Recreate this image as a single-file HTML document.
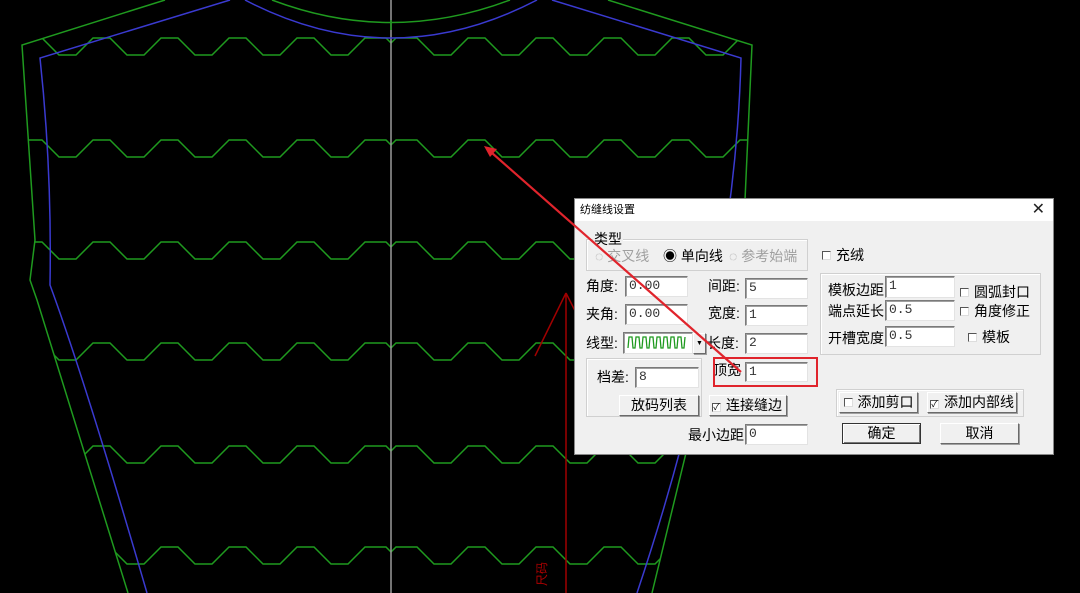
<!DOCTYPE html>
<html><head><meta charset="utf-8">
<style>
*{margin:0;padding:0;box-sizing:border-box}
body{width:1080px;height:593px;background:#000;position:relative;overflow:hidden;font-family:"Liberation Sans","Noto Sans CJK SC",sans-serif;font-size:14px;color:#000}
svg.bg{position:absolute;left:0;top:0}
.dlg{position:absolute;left:574px;top:198px;width:480px;height:257px;background:#f0f0f0;border:1px solid #888}
.title{position:absolute;left:0;top:0;width:478px;height:22px;background:#fff;font-size:11px;line-height:22px;padding-left:5px}
.x{position:absolute;right:8px;top:0;font-size:16px;line-height:21px;color:#222}
.a{position:absolute;white-space:nowrap;line-height:16px}
.inp{position:absolute;background:#fff;border:1px solid #7a7a7a;border-right-color:#e3e3e3;border-bottom-color:#e3e3e3;box-shadow:inset 1px 1px 0 #a0a0a0;font-family:"Liberation Mono","Noto Sans CJK SC",monospace;font-size:13px;line-height:18px;padding-left:3px;color:#333}
.btn{position:absolute;background:#f0f0f0;border:1px solid #fff;border-right-color:#6a6a6a;border-bottom-color:#6a6a6a;box-shadow:1px 1px 0 #a0a0a0;text-align:center;line-height:19px;font-size:14px}
.grp{position:absolute;border:1px solid #d0d0d0;box-shadow:inset 1px 1px 0 #fff}
.cb{display:inline-block;width:9px;height:9px;border:1px solid #555;border-right-color:#ddd;border-bottom-color:#ddd;background:#fff;vertical-align:0px;margin-right:5px;font-size:9px;line-height:7px;text-align:center}
.grey{color:#a0a0a0}
</style></head><body>
<svg class="bg" width="1080" height="593" viewBox="0 0 1080 593">
<defs>
<clipPath id="cl"><polygon points="165,0 22,45 35,240 30,280 37,300 128,593 652,593 686,453 745,200 752,45 608,0"/></clipPath>
<path id="hw" d="M391,5 L386,0 L365,0 L348,17 L331,17 L314,0 L297,0 L280,17 L263,17 L246,0 L229,0 L212,17 L195,17 L178,0 L161,0 L144,17 L127,17 L110,0 L93,0 L76,17 L59,17 L42,0 L25,0 L8,17 L-9,17 L-26,0" fill="none" stroke="#1f9a1f" stroke-width="1.5"/>
<g id="w"><use href="#hw"/><use href="#hw" transform="translate(782,0) scale(-1,1)"/></g>
</defs>
<g clip-path="url(#cl)">
<use href="#w" transform="translate(0,38)"/>
<use href="#w" transform="translate(0,140)"/>
<use href="#w" transform="translate(0,242)"/>
<use href="#w" transform="translate(0,343)"/>
<use href="#w" transform="translate(0,446)"/>
<use href="#w" transform="translate(0,547)"/>
</g>
<line x1="391" y1="0" x2="391" y2="593" stroke="#9a9a9a" stroke-width="1.5"/>
<path d="M165,0 L22,45 L35,240 L30,280 L37,300 L128,593 M608,0 L752,45 L745,200 L686,453 L652,593" fill="none" stroke="#1f9a1f" stroke-width="1.5"/>
<path d="M272,0 Q391,45 510,0" fill="none" stroke="#1f9a1f" stroke-width="1.5"/>
<line x1="391" y1="20" x2="391" y2="30" stroke="#1f9a1f" stroke-width="1.5"/>
<path d="M230,0 L40,58 Q52,170 50,285 Q85,380 147,593 M552,0 L741,58 Q735,300 637,593 M245,0 Q391,76 537,0" fill="none" stroke="#3a3ad0" stroke-width="1.5"/>
<path d="M566,293 L566,593 M566,293 L535,356 M566,293 L598,356" fill="none" stroke="#a00000" stroke-width="1.5"/>
<text x="528" y="592" fill="#b00000" font-size="12" font-family="Noto Sans CJK SC" transform="rotate(-90 534 580)">尺码</text>
</svg>
<div class="dlg">
<div class="title">纺缝线设置</div><div class="x">✕</div>
<div class="grp" style="left:11px;top:40px;width:222px;height:32px"></div>
<div class="a" style="left:18px;top:32px;background:#f0f0f0;padding:0 1px">类型</div>
<div class="a grey" style="left:20px;top:49px">◌ 交叉线</div>
<div class="a" style="left:88px;top:49px">◉ 单向线</div>
<div class="a grey" style="left:154px;top:49px">◌ 参考始端</div>
<div class="a" style="left:247px;top:48px"><span class="cb"></span>充绒</div>

<div class="a" style="left:11px;top:79px">角度:</div><div class="inp" style="left:50px;top:77px;width:63px;height:21px">0.00</div>
<div class="a" style="left:133px;top:79px">间距:</div><div class="inp" style="left:170px;top:79px;width:63px;height:21px">5</div>
<div class="a" style="left:11px;top:107px">夹角:</div><div class="inp" style="left:50px;top:105px;width:63px;height:21px">0.00</div>
<div class="a" style="left:133px;top:106px">宽度:</div><div class="inp" style="left:170px;top:106px;width:63px;height:21px">1</div>
<div class="a" style="left:11px;top:136px">线型:</div>
<div class="inp" style="left:48px;top:133px;width:70px;height:22px;padding:1px 2px"><svg width="62" height="16"><path d="M2,14 L3,3 L6,3 L7,14 L9,14 L10,3 L13,3 L14,14 L16,14 L17,3 L20,3 L21,14 L23,14 L24,3 L27,3 L28,14 L30,14 L31,3 L34,3 L35,14 L37,14 L38,3 L41,3 L42,14 L44,14 L45,3 L48,3 L49,14 L51,14 L52,3 L55,3 L56,14 L58,14 L59,3" fill="none" stroke="#1f9a1f" stroke-width="1.3"/></svg></div>
<div class="btn" style="left:118px;top:134px;width:13px;height:21px;font-size:7px;line-height:20px">▼</div>
<div class="a" style="left:132px;top:136px">长度:</div><div class="inp" style="left:170px;top:134px;width:63px;height:21px">2</div>

<div class="grp" style="left:11px;top:159px;width:116px;height:59px"></div>
<div class="a" style="left:22px;top:170px">档差:</div><div class="inp" style="left:60px;top:168px;width:64px;height:21px">8</div>
<div class="btn" style="left:44px;top:196px;width:80px;height:21px">放码列表</div>
<div class="a" style="left:138px;top:163px">顶宽</div><div class="inp" style="left:170px;top:163px;width:63px;height:20px">1</div>
<div class="btn" style="left:134px;top:196px;width:78px;height:21px;text-align:left;padding-left:2px"><span class="cb">✓</span>连接缝边</div>
<div class="a" style="left:113px;top:228px">最小边距</div><div class="inp" style="left:170px;top:225px;width:63px;height:21px">0</div>

<div class="grp" style="left:245px;top:74px;width:221px;height:82px"></div>
<div class="a" style="left:253px;top:83px">模板边距</div><div class="inp" style="left:310px;top:77px;width:70px;height:22px">1</div>
<div class="a" style="left:253px;top:104px">端点延长</div><div class="inp" style="left:310px;top:101px;width:70px;height:21px">0.5</div>
<div class="a" style="left:253px;top:131px">开槽宽度</div><div class="inp" style="left:310px;top:127px;width:70px;height:21px">0.5</div>
<div class="a" style="left:385px;top:85px"><span class="cb"></span>圆弧封口</div>
<div class="a" style="left:385px;top:104px"><span class="cb"></span>角度修正</div>
<div class="a" style="left:393px;top:130px"><span class="cb"></span>模板</div>

<div class="grp" style="left:261px;top:190px;width:188px;height:28px"></div>
<div class="btn" style="left:264px;top:193px;width:79px;height:21px"><span class="cb"></span>添加剪口</div>
<div class="btn" style="left:352px;top:193px;width:90px;height:21px"><span class="cb">✓</span>添加内部线</div>
<div class="btn" style="left:267px;top:224px;width:79px;height:21px;border:1px solid #333;box-shadow:inset 1px 1px 0 #fff,inset -1px -1px 0 #777">确定</div>
<div class="btn" style="left:365px;top:224px;width:79px;height:21px">取消</div>
</div>
<svg class="bg" width="1080" height="593" viewBox="0 0 1080 593" style="pointer-events:none">
<rect x="714" y="358" width="103" height="28" fill="none" stroke="#e0242c" stroke-width="2"/>
<line x1="741" y1="372" x2="492" y2="153" stroke="#e0242c" stroke-width="2.2"/>
<polygon points="484,146 497,149 490,157" fill="#e0242c"/>
</svg>
</body></html>
